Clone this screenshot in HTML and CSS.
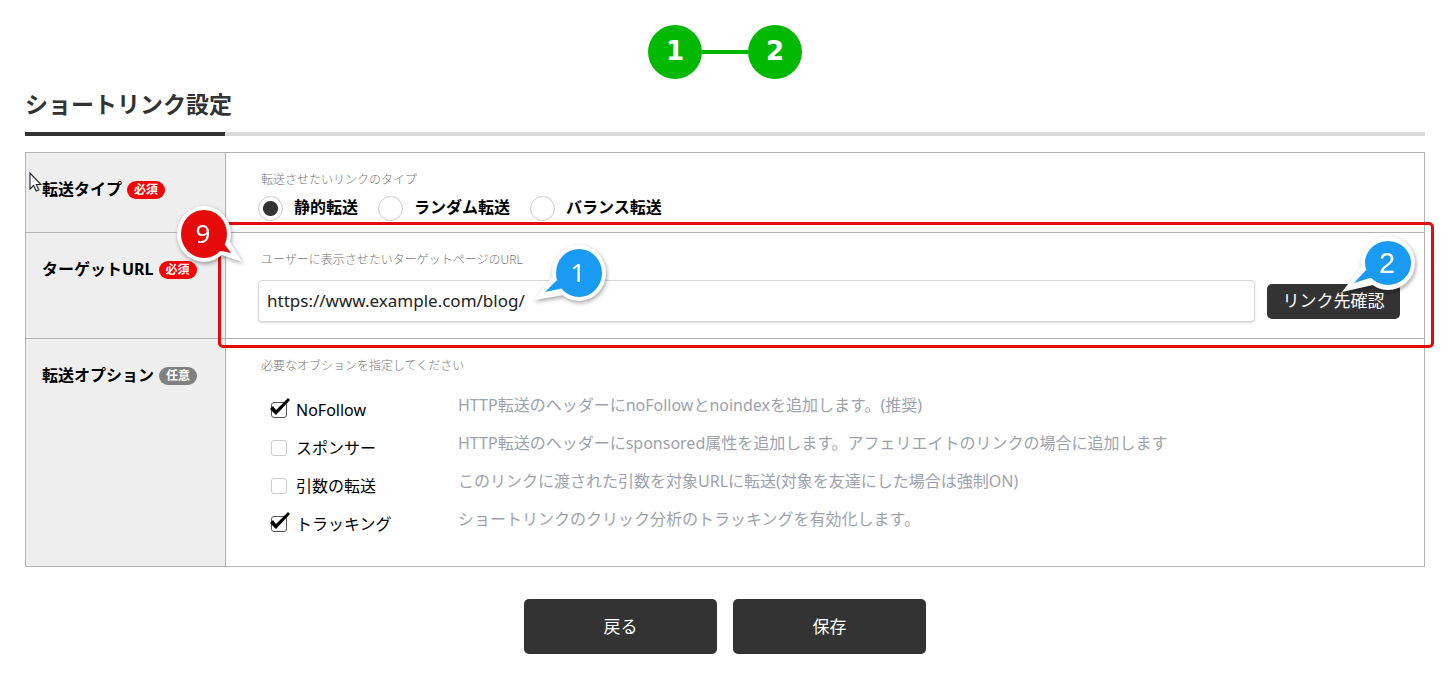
FILE: index.html
```html
<!DOCTYPE html>
<html lang="ja">
<head>
  <meta charset="UTF-8" />
  <meta name="viewport" content="width=device-width, initial-scale=1.0" />
  <title>ショートリンク設定</title>
  <link rel="stylesheet" href="styles.css">
</head>
<body>
  <main class="page">
    <div class="steps">
      <span class="step">1</span>
      <span class="step-line"></span>
      <span class="step">2</span>
    </div>

    <h1 class="title">ショートリンク設定</h1>

    <form>
      <div class="table">
        <div class="row">
          <div class="head" id="type-head">転送タイプ<span class="tag">必須</span></div>
          <div class="body">
            <p class="hint">転送させたいリンクのタイプ</p>
            <div class="radios" role="radiogroup" aria-labelledby="type-head">
              <label><input type="radio" name="type" checked />静的転送</label>
              <label><input type="radio" name="type" />ランダム転送</label>
              <label><input type="radio" name="type" />バランス転送</label>
            </div>
          </div>
          <svg class="cursor" width="14" height="21" viewBox="0 0 14 21">
            <path d="M1 1v16l3.600-3.500 2.600 5.600 2.600-1.200-2.500-5.400h4.600z" fill="#fff" stroke="#223" stroke-width="1.100" />
          </svg>
        </div>

        <div class="row">
          <div class="head"><label for="url">ターゲットURL</label><span class="tag">必須</span></div>
          <div class="body">
            <p class="hint">ユーザーに表示させたいターゲットページのURL</p>
            <div class="url">
              <input type="text" id="url" value="https://www.example.com/blog/" />
              <button type="button" class="btn check-btn">リンク先確認</button>
            </div>
          </div>

          <div class="frame"></div>
          <svg class="pin pin-nine" width="80" height="70" viewBox="0 0 80 70">
            <path d="M60 42L72 62L49 54Z" fill="#fff" />
            <ellipse cx="34" cy="34" rx="27" ry="28" fill="#fff" />
            <path d="M53 42L61 53L46 50Z" fill="#e60a0a" />
            <ellipse cx="34" cy="34" rx="23" ry="24" fill="#e60a0a" />
            <text x="33" y="43" class="num">9</text>
          </svg>
          <svg class="pin pin-one" width="90" height="70" viewBox="0 0 90 70">
            <path d="M32 38L14 61L44 56Z" fill="#fff" />
            <ellipse cx="59" cy="34" rx="27" ry="28" fill="#fff" />
            <path d="M37 41L25 53L44 49Z" fill="#1a9bf3" />
            <ellipse cx="59" cy="34" rx="23" ry="24" fill="#1a9bf3" />
            <text x="58" y="43" class="num">1</text>
          </svg>
          <svg class="pin pin-two" width="90" height="70" viewBox="0 0 90 70">
            <path d="M32 38L13 63L44 56Z" fill="#fff" />
            <ellipse cx="59" cy="34" rx="27" ry="27" fill="#fff" />
            <path d="M37 41L25 54L44 48Z" fill="#1a9bf3" />
            <ellipse cx="59" cy="34" rx="23" ry="22" fill="#1a9bf3" />
            <text x="58" y="44" class="num num-arial">2</text>
          </svg>
        </div>

        <div class="row">
          <div class="head">転送オプション<span class="tag tag-any">任意</span></div>
          <div class="body">
            <p class="hint">必要なオブションを指定してください</p>
            <div class="options">
              <div class="option">
                <label><input type="checkbox" checked />NoFollow</label>
                <p>HTTP転送のヘッダーにnoFollowとnoindexを追加します。(推奨)</p>
              </div>
              <div class="option">
                <label><input type="checkbox" />スポンサー</label>
                <p>HTTP転送のヘッダーにsponsored属性を追加します。アフェリエイトのリンクの場合に追加します</p>
              </div>
              <div class="option">
                <label><input type="checkbox" />引数の転送</label>
                <p>このリンクに渡された引数を対象URLに転送(対象を友達にした場合は強制ON)</p>
              </div>
              <div class="option">
                <label><input type="checkbox" checked />トラッキング</label>
                <p>ショートリンクのクリック分析のトラッキングを有効化します。</p>
              </div>
            </div>
          </div>
        </div>
      </div>

      <div class="actions">
        <button type="button" class="btn">戻る</button>
        <button type="submit" class="btn">保存</button>
      </div>
    </form>
  </main>
</body>
</html>
```
FILE: styles.css
```css
* {
  box-sizing: border-box;
}

body {
  margin: 0;
  font-family: "Noto Sans", "Noto Sans CJK JP", sans-serif;
  font-size: 16px;
  line-height: 24px;
  background: white;
  color: black;
}

p {
  margin: 0;
}

.page {
  padding: 25px 28px 30px 25px;
}

/* steps */
.steps {
  display: flex;
  justify-content: center;
  align-items: center;
}

.step {
  width: 54px;
  height: 54px;
  border-radius: 50%;
  background: #00b900;
  color: white;
  font-family: "DejaVu Sans", sans-serif;
  font-size: 26px;
  font-weight: bold;
  line-height: 52px;
  text-align: center;
}

.step-line {
  width: 46px;
  height: 4px;
  background: #00b900;
}

.title {
  position: relative;
  margin: 8px 0 16px;
  padding-bottom: 11px;
  border-bottom: 4px solid #dbdbdb;
  color: #333;
  font-size: 23px;
  font-weight: bold;
  line-height: 34px;
}

.title::after {
  content: "";
  position: absolute;
  left: 0;
  bottom: -4px;
  width: 200px;
  height: 4px;
  background: #333;
}

/* settings table */
.table {
  border: 1px solid #b3b3b3;
}

.row {
  position: relative;
  display: flex;
}

.row + .row {
  border-top: 1px solid #b3b3b3;
}

.head {
  flex: 0 0 200px;
  padding: 24px 0 0 16px;
  border-right: 1px solid #b3b3b3;
  background: #eee;
  font-weight: bold;
}

.tag {
  display: inline-block;
  margin-left: 5px;
  padding: 0 7px;
  border-radius: 9px;
  background: red;
  color: white;
  font-size: 12px;
  line-height: 18px;
  vertical-align: 1px;
}

.tag-any {
  background: #808080;
}

.body {
  flex: 1;
  padding: 18px 24px 11px 32px;
}

.hint {
  padding-left: 3px;
  color: #777;
  font-size: 12px;
  font-weight: 300;
  line-height: 18px;
}

.radios {
  display: flex;
  gap: 20px;
  margin-top: 7px;
  font-weight: bold;
}

.radios label {
  display: flex;
  gap: 11px;
  line-height: 22px;
}

.radios input {
  appearance: none;
  width: 25px;
  height: 25px;
  margin: 0;
  border: 1px solid #ccc;
  border-radius: 50%;
  background: white;
}

.radios input:checked {
  background: radial-gradient(circle, #333 7px, white 8px);
}

.url {
  display: flex;
  align-items: center;
  gap: 12px;
  margin: 11px 0 5px;
}

.url input {
  flex: 1;
  height: 42px;
  padding: 0 8px 2px;
  border: 1px solid #d9d9d9;
  border-radius: 4px;
  box-shadow: 0 1px 2px rgba(0, 0, 0, 0.15);
  color: #222;
  font-family: inherit;
  font-size: 17px;
}

.btn {
  width: 193px;
  height: 55px;
  padding: 0 0 3px;
  border: none;
  border-radius: 5px;
  background: #333;
  color: white;
  font-family: inherit;
  font-size: 17px;
  cursor: pointer;
}

.check-btn {
  width: 133px;
  height: 35px;
}

.options {
  margin: 16px 0 12px;
}

.option {
  display: flex;
  height: 38px;
  padding-left: 13px;
}

.option label {
  display: flex;
  align-items: center;
  gap: 9px;
  width: 187px;
}

.option p {
  color: #9ca3af;
  line-height: 28px;
}

.option input {
  appearance: none;
  position: relative;
  width: 16px;
  height: 16px;
  margin: 0;
  border: 1px solid #ccc;
  border-radius: 3px;
}

.option input:checked {
  border-color: #555;
}

.option input:checked::after {
  content: "";
  position: absolute;
  left: -2px;
  top: -5px;
  width: 20px;
  height: 17px;
  background: black;
  clip-path: polygon(0 11px, 3px 8px, 6px 12px, 18px 0, 20px 2px, 6px 17px);
}

.actions {
  display: flex;
  justify-content: center;
  gap: 16px;
  margin-top: 32px;
}

/* callouts */
.frame {
  position: absolute;
  z-index: 1;
  top: -11px;
  right: -10px;
  bottom: -10px;
  left: 192px;
  border: 3px solid #e60a0a;
  border-radius: 5px;
  pointer-events: none;
}

.pin {
  position: absolute;
  z-index: 2;
  filter: drop-shadow(1px 2px 2px rgba(0, 0, 0, 0.35));
  pointer-events: none;
}

.pin-nine {
  left: 144px;
  top: -33px;
}

.pin-one {
  left: 494px;
  top: 6px;
}

.pin-two {
  right: 5px;
  top: -4px;
}

.num {
  fill: white;
  font-size: 26px;
  text-anchor: middle;
}

.num-arial {
  font-family: "Liberation Sans", Arial, sans-serif;
  font-size: 29px;
}

.cursor {
  position: absolute;
  left: 3px;
  top: 19px;
}
```
